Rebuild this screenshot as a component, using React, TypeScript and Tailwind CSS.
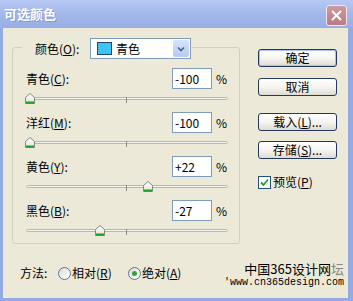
import React from 'react';

const font = { fontFamily: '"Noto Sans CJK SC", "Liberation Sans", sans-serif' };

function Key({ k }: { k: string }) {
  return <span className="underline underline-offset-1">{k}</span>;
}

function Thumb() {
  return (
    <svg width="10" height="11" viewBox="0 0 10 11">
      <defs>
        <linearGradient id="tg" x1="0" y1="0" x2="0" y2="1">
          <stop offset="0" stopColor="#ffffff" />
          <stop offset="1" stopColor="#e2e2da" />
        </linearGradient>
      </defs>
      <path d="M0.5 4.5 L5 0.5 L9.5 4.5 L9.5 10.5 L0.5 10.5 Z" fill="url(#tg)" stroke="#7d8c7d" />
      <path d="M1 9.5 H9" stroke="#21a121" strokeWidth="2" />
    </svg>
  );
}

interface SliderRowProps {
  label: string;
  hotkey: string;
  value: number;
}

function SliderRow({ label, hotkey, value }: SliderRowProps) {
  const center = 4 + ((value + 100) / 200) * 193;
  const text = value > 0 ? `+${value}` : `${value}`;
  return (
    <div className="flex h-[44px] flex-col">
      <div className="flex h-[21px] items-center">
        <span className="flex-1 text-[12px] text-black">
          {label}(<Key k={hotkey} />):
        </span>
        <div className="flex h-[21px] w-[40px] items-center border border-[#7f9db9] bg-white pl-[2px] text-[12px] text-black">
          {text}
        </div>
        <span className="w-[16px] pl-[4px] text-[12px] text-black">%</span>
      </div>
      <div className="relative h-[23px] w-[202px]">
        <div className="absolute left-0 right-0 top-[8px] h-[3px] rounded-full border border-[#b9b6a6] bg-[#f6f5ef]" />
        <div className="absolute left-[100px] top-[8px] h-[6px] w-px bg-[#8e8c80]" />
        <div className="absolute top-[4px]" style={{ left: center - 5 }}>
          <Thumb />
        </div>
      </div>
    </div>
  );
}

function XpButton({ children, primary }: { children: React.ReactNode; primary?: boolean }) {
  return (
    <div
      className={`flex h-[18px] w-[79px] items-center justify-center rounded-[3px] border border-[#23395c] bg-gradient-to-b from-white via-[#f6f5f1] to-[#dedcd2] text-[12px] text-black ${
        primary ? 'shadow-[inset_0_0_0_1px_#a9c2ee]' : ''
      }`}
    >
      {children}
    </div>
  );
}

function Radio({ checked }: { checked?: boolean }) {
  return (
    <div className="flex h-[13px] w-[13px] items-center justify-center rounded-full border border-[#5a76a0] bg-gradient-to-br from-[#dcdcd5] to-white">
      {checked && <div className="h-[5px] w-[5px] rounded-full bg-[#2fa82f]" />}
    </div>
  );
}

export default function App() {
  return (
    <div className="flex h-[301px] w-[353px] flex-col bg-[#94aae3]" style={font}>
      {/* title bar */}
      <div className="flex h-[28px] shrink-0 items-center justify-between bg-gradient-to-b from-[#b7c8f2] via-[#a3b8ea] to-[#98aee5] pl-[4px] pr-[6px]">
        <span className="text-[13px] font-bold text-white [text-shadow:1px_1px_0_#8197cf]">可选颜色</span>
        <div className="mt-[2px] flex h-[21px] w-[21px] items-center justify-center rounded-[3px] border border-[#f1e7ea] bg-gradient-to-b from-[#cf9aa1] to-[#b97a84]">
          <svg width="11" height="11" viewBox="0 0 11 11">
            <path d="M1.5 1.5 L9.5 9.5 M9.5 1.5 L1.5 9.5" stroke="#ffffff" strokeWidth="2" strokeLinecap="round" />
          </svg>
        </div>
      </div>

      {/* body */}
      <div className="mb-[3px] ml-[3px] mr-[5px] flex flex-1 flex-col bg-[#ece9d8] pl-[9px] pt-[19px]">
        <div className="flex">
          {/* group box */}
          <div className="relative h-[197px] w-[228px] rounded-[3px] border border-[#d0d0bf] pl-[13px] pr-[11px] pt-[20px]">
            <div className="absolute left-[9px] top-[-10px] flex items-center bg-[#ece9d8] pl-[13px] pr-[1px]">
              <span className="w-[55px] text-[12px] text-black">
                颜色(<Key k="O" />):
              </span>
              <div className="flex h-[21px] w-[101px] items-center border border-[#7f9db9] bg-white pl-[6px] pr-[1px]">
                <div className="h-[13px] w-[15px] border border-[#1d4a66] bg-[#3dc4f4]" />
                <span className="ml-[4px] flex-1 text-[12px] text-black">青色</span>
                <div className="flex h-[17px] w-[16px] items-center justify-center rounded-[2px] bg-gradient-to-b from-[#d8e3fd] to-[#b6c9f6]">
                  <svg width="8" height="6" viewBox="0 0 8 6">
                    <path d="M1 1.5 L4 4.5 L7 1.5" stroke="#4d6185" strokeWidth="1.6" fill="none" />
                  </svg>
                </div>
              </div>
            </div>
            <SliderRow label="青色" hotkey="C" value={-100} />
            <SliderRow label="洋红" hotkey="M" value={-100} />
            <SliderRow label="黄色" hotkey="Y" value={22} />
            <SliderRow label="黑色" hotkey="B" value={-27} />
          </div>

          {/* buttons */}
          <div className="ml-[18px] mt-[2px] flex flex-col">
            <XpButton primary>确定</XpButton>
            <div className="mt-[11px]">
              <XpButton>取消</XpButton>
            </div>
            <div className="mt-[17px]">
              <XpButton>
                载入(<Key k="L" />)...
              </XpButton>
            </div>
            <div className="mt-[10px]">
              <XpButton>
                存储(<Key k="S" />)...
              </XpButton>
            </div>
            <div className="mt-[14px] flex items-center">
              <div className="flex h-[13px] w-[13px] items-center justify-center border border-[#1c5180] bg-white">
                <svg width="9" height="9" viewBox="0 0 9 9">
                  <path d="M1 4.5 L3.5 7 L8 1.5" stroke="#21a121" strokeWidth="1.8" fill="none" />
                </svg>
              </div>
              <span className="ml-[2px] text-[12px] text-black">
                预览(<Key k="P" />)
              </span>
            </div>
          </div>
        </div>

        {/* bottom row */}
        <div className="flex items-start">
          <div className="ml-[8px] mt-[22px] flex h-[14px] items-center text-[12px] text-black">
            <span className="w-[38px]">方法:</span>
            <Radio />
            <span className="ml-[1px] w-[56px]">
              相对(<Key k="R" />)
            </span>
            <Radio checked />
            <span className="ml-[1px]">
              绝对(<Key k="A" />)
            </span>
          </div>
          <div className="ml-auto mr-[4px] mt-[17px] flex flex-col items-end">
            <span className="text-[13px] leading-[16px] text-black">
              中国365设计网<span className="text-[#8a8a80]">坛</span>
            </span>
            <span className="text-[10px] leading-[12px] text-black" style={{ fontFamily: '"Liberation Mono", monospace' }}>
              'www.cn365design.com
            </span>
          </div>
        </div>
      </div>
    </div>
  );
}
